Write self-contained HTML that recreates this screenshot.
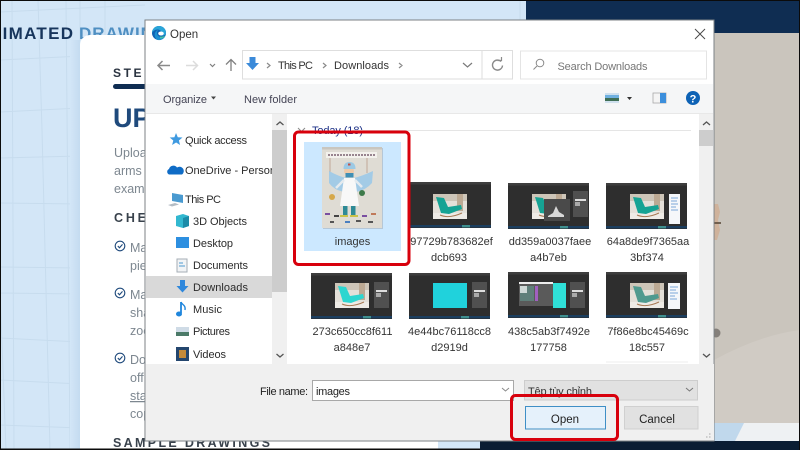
<!DOCTYPE html>
<html><head><meta charset="utf-8"><title>Open</title>
<style>
html,body{margin:0;padding:0;width:800px;height:450px;overflow:hidden;background:#000}
svg{display:block;filter:blur(.3px)}
text{font-family:"Liberation Sans","Noto Sans CJK SC",sans-serif;font-size:11px;fill:#2b2b2b}
.m{text-anchor:middle;font-size:11px;fill:#333}
.g{fill:#7d8790;font-size:12.5px}
.h{font-weight:bold;fill:#39424c;font-size:12.5px;letter-spacing:2.8px}
</style></head><body>
<svg width="800" height="450" viewBox="0 0 800 450" xmlns="http://www.w3.org/2000/svg">
<defs>
<symbol id="ph" viewBox="0 0 34 25" width="34" height="25" overflow="hidden">
  <rect width="34" height="25" fill="#e4e0d9"/>
  <rect x="0" y="0" width="34" height="7" fill="#cdc5b8"/>
  <rect x="24" y="0" width="6" height="17" fill="#bca993"/>
  <rect x="0" y="19" width="34" height="6" fill="#eeebe6"/>
  <path d="M3 3L11 4L15 13L28 11L29 15L16 20L8 19Z" fill="currentColor"/>
  <path d="M7 21Q16 25 29 19" stroke="#a87a55" stroke-width="1" fill="none"/>
</symbol>
<symbol id="sh" viewBox="0 0 81 46" width="81" height="46">
  <rect width="81" height="46" fill="#2e2e2e"/>
  <rect width="81" height="2.5" fill="#3e3e3e"/>
  <rect y="43" width="81" height="2.4" fill="#1b3e5f"/>
  <rect x="52" y="43" width="8" height="2.4" fill="#3e8f8f"/>
</symbol>
<symbol id="pn" viewBox="0 0 15 26" width="15" height="26">
  <rect width="15" height="26" fill="#505050"/>
  <rect x="2" y="8" width="11" height="2" fill="#ddd"/>
  <rect x="2" y="11" width="5" height="4" fill="#aaa"/>
</symbol>
<linearGradient id="sd" x1="0" x2="1" y1="0" y2="0"><stop offset="0" stop-color="#d3e6f7"/><stop offset="1" stop-color="#c4dbf0"/></linearGradient>
</defs>

<!-- page background -->
<rect width="800" height="450" fill="#d3e6f7"/>
<g stroke="#c7dcee" stroke-width="1" fill="none">
  <path d="M12 0L14 450M38 0L42 130L50 450M66 0L70 450M0 12L145 5M0 60L145 53M0 112L80 108M0 158L80 156M0 203L80 204M0 267L80 268M0 293L80 294M0 338L80 342M0 380L80 384M0 425L80 428M0 290L6 450M80 0V40M105 0V35M520 0V20"/>
</g>
<rect x="70" y="40" width="10" height="410" fill="url(#sd)"/>
<rect x="526" y="0" width="274" height="33" fill="#0f2d52"/>
<rect x="714" y="33" width="86" height="390" fill="#cac5bd"/>
<path d="M714 360Q760 335 800 330V423H714Z" fill="#d0cbc4"/>
<path d="M714 204h4l2 8-2 8 2 10-3 10h-3z" fill="#d2a583" opacity=".6"/>
<rect x="714" y="222" width="7" height="2" fill="#5a4a3a" opacity=".8"/>
<circle cx="716" cy="333" r="4.5" fill="#85807b"/>
<rect x="714" y="423" width="86" height="18" fill="#eef1f3"/>
<path d="M714 423H744L735 441H714Z" fill="#c0d8ec"/>
<rect x="480" y="441" width="320" height="9" fill="#0a1d33"/>

<text x="-11" y="39" textLength="84" style="font-size:17px;font-weight:bold;fill:#17355c">NIMATED</text>
<text x="79" y="39" style="font-size:17px;font-weight:bold;fill:#4f8fc2;letter-spacing:1px">DRAWING</text>

<!-- card -->
<rect x="80" y="35" width="358" height="430" rx="10" fill="#fff"/>
<text x="113" y="77" style="font-size:12px;font-weight:bold;fill:#2a3340;letter-spacing:2.6px">STEP</text>
<rect x="113" y="84" width="40" height="5" rx="2.5" fill="#0f2d52"/>
<text x="113" y="127" style="font-size:27px;font-weight:bold;fill:#1f4a7c">UP</text>
<text x="114" y="157" class="g">Upload</text>
<text x="114" y="175" class="g">arms</text>
<text x="114" y="193" class="g">example</text>
<text x="114" y="222" class="h">CHECK</text>
<g fill="none" stroke="#1f4a7c" stroke-width="1.1">
  <circle cx="120" cy="246" r="4.8"/><path d="M117.8 246l1.7 1.8 3-3.4"/>
  <circle cx="120" cy="293" r="4.8"/><path d="M117.8 293l1.7 1.8 3-3.4"/>
  <circle cx="120" cy="358" r="4.8"/><path d="M117.8 358l1.7 1.8 3-3.4"/>
</g>
<text x="130" y="252" class="g">Make</text>
<text x="130" y="270" class="g">piece</text>
<text x="130" y="299" class="g">Make</text>
<text x="130" y="317" class="g">shape</text>
<text x="130" y="335" class="g">zoom</text>
<text x="130" y="364" class="g">Do</text>
<text x="130" y="382" class="g">off</text>
<text x="130" y="400" class="g" text-decoration="underline">stand</text>
<text x="130" y="418" class="g">copy</text>
<text x="113" y="447" textLength="157" style="font-size:12.5px;font-weight:bold;fill:#39424c">SAMPLE DRAWINGS</text>

<!-- dialog -->
<rect x="145" y="20" width="569" height="421" fill="#fff" stroke="#7c8286" stroke-width="1"/>
<!-- edge logo -->
<circle cx="159" cy="33" r="7" fill="#0f62b4"/>
<path d="M152 33A7 7 0 0 1 166 33C166 35 163 36 161 35.500C163 33 161 29.500 157.500 29.500C155 29.500 153 31 152 33Z" fill="#2aa5d8"/>
<path d="M157 39.800A7 7 0 0 0 165.500 35.500C163 37.500 159 37.500 157.500 35C156.500 33 157 31 158.500 30C155.500 30.500 154 33.500 155 36.500C155.500 38 156 39 157 39.800Z" fill="#1c8fd0"/>
<ellipse cx="161" cy="33.500" rx="2.800" ry="2" fill="#fff"/>
<path d="M160 38.500Q163.500 38.500 165.500 35.500Q163 37 160 36.500Z" fill="#45c4a0"/>
<text x="170" y="38" style="font-size:11.500px;fill:#333">Open</text>
<path d="M695 29l10 10M705 29l-10 10" stroke="#4a4a4a" stroke-width="1" fill="none"/>

<!-- nav buttons -->
<path d="M170 65.500h-12M162.500 61l-4.500 4.500 4.500 4.500" stroke="#8a8a8a" stroke-width="1.500" fill="none"/>
<path d="M186 65.500h11M193 61l4.500 4.500-4.500 4.500" stroke="#dcdcdc" stroke-width="1.500" fill="none"/>
<path d="M210 64l2.500 2.500 2.500-2.500" stroke="#808080" stroke-width="1.200" fill="none"/>
<path d="M231 71V59.500M226 64.500l5-5 5 5" stroke="#808080" stroke-width="1.300" fill="none"/>

<!-- address bar -->
<rect x="242.500" y="50.500" width="270" height="28.500" fill="#fff" stroke="#dedede"/>
<path d="M482 51v28" stroke="#dedede"/>
<path d="M249.500 57h6v6h3.500l-6.500 7-6.500-7h3.500z" fill="#3b8ad9"/>
<path d="M267 63l3 2.500-3 2.500M323 63l3 2.500-3 2.500M399 63l3 2.500-3 2.500" stroke="#8a8a8a" stroke-width="1.200" fill="none"/>
<text x="278" y="69" textLength="35" style="fill:#333">This PC</text>
<text x="334" y="69" textLength="55" style="fill:#333">Downloads</text>
<path d="M463 63l4.500 4 4.500-4" stroke="#7a7a7a" stroke-width="1.200" fill="none"/>
<path d="M501 61.500a5 5 0 1 0 1.500 4" stroke="#8a8a8a" stroke-width="1.400" fill="none"/>
<path d="M497.500 60.500h4v-3.500" stroke="#8a8a8a" stroke-width="1.200" fill="none"/>

<!-- search -->
<rect x="520.500" y="51" width="186" height="28" fill="#fff" stroke="#e4e4e4"/>
<circle cx="540" cy="63" r="3.800" fill="none" stroke="#8a8a8a"/>
<path d="M537 66l-3.500 3.500" stroke="#8a8a8a"/>
<text x="557.500" y="70" textLength="90" style="fill:#777">Search Downloads</text>

<!-- toolbar -->
<rect x="146" y="84" width="567" height="30" fill="#f5f6f7"/>
<path d="M146 113.500H713" stroke="#e8e8e8"/>
<text x="163" y="103" textLength="44" style="fill:#445">Organize</text>
<path d="M211 96.500h5l-2.500 3z" fill="#444"/>
<text x="244" y="103" textLength="53" style="fill:#445">New folder</text>
<rect x="605" y="93" width="14" height="10" fill="#cfe0ee"/>
<rect x="605" y="95" width="14" height="3" fill="#6fb0e0"/>
<rect x="605" y="98" width="14" height="3" fill="#3f6e55"/>
<path d="M627 97h5l-2.500 3z" fill="#333"/>
<rect x="653" y="93" width="13" height="10" fill="#f4f4f4" stroke="#a8a8a8" stroke-width=".8"/>
<rect x="660" y="93" width="6" height="10" fill="#3c8fdc"/>
<circle cx="693" cy="98" r="7" fill="#0d62b5"/>
<text x="693" y="102.500" text-anchor="middle" style="font-size:11px;font-weight:bold;fill:#fff">?</text>

<!-- nav pane -->
<rect x="146" y="276" width="126" height="22" fill="#d9d9d9"/>
<path d="M176 133l1.800 4.200 4.700.3-3.600 3 1.200 4.500-4-2.500-4 2.500 1.200-4.500-3.600-3 4.700-.3z" fill="#3f9ae0"/>
<text x="185" y="144" textLength="62">Quick access</text>
<path d="M169 174.500a3 3 0 0 1 0-5.500a4.500 4.500 0 0 1 8-1.500a3.500 3.500 0 0 1 5 7z" fill="#0f6cc6"/>
<text x="185" y="174" textLength="91">OneDrive - Person</text>
<path d="M172 193l11 2v8l-11-2z" fill="#4a9ad0"/>
<path d="M168 205l7-2 4 1.500-7 2z" fill="#b4bcc4"/>
<text x="185" y="203" textLength="36">This PC</text>
<path d="M176 216l7-2 6 2v10l-6 2-7-2z" fill="#32b8d0"/><path d="M183 218v10l6-2v-10z" fill="#1b8ba8"/>
<text x="193" y="225" textLength="54">3D Objects</text>
<rect x="176" y="237" width="13" height="11" fill="#2d8fe0"/>
<text x="193" y="247" textLength="40">Desktop</text>
<rect x="177" y="259" width="10" height="13" fill="#f2f4f6" stroke="#a5aeb6"/>
<path d="M179 263h4M179 266h6" stroke="#4f9ad0"/>
<text x="193" y="269" textLength="55">Documents</text>
<path d="M180 280h5v6h3.500l-6 6.500-6-6.500h3.500z" fill="#2f88dc"/>
<text x="193" y="291" textLength="55">Downloads</text>
<path d="M181 302v11" stroke="#1f86dc" stroke-width="1.800"/><ellipse cx="179" cy="314" rx="3" ry="2.500" fill="#1f86dc"/><path d="M181 302c1 3 5 3 4 8" stroke="#1f86dc" stroke-width="1.400" fill="none"/>
<text x="193" y="313" textLength="29">Music</text>
<rect x="176" y="327" width="13" height="9" fill="#cfdbe6"/><rect x="176" y="332" width="13" height="4" fill="#4b7a68"/>
<text x="193" y="335" textLength="37">Pictures</text>
<rect x="176" y="347" width="13" height="14" fill="#24466e"/><rect x="179" y="350" width="7" height="8" fill="#c48a3a"/>
<text x="193" y="358" textLength="33">Videos</text>
<rect x="272" y="114" width="15" height="250" fill="#f0f0f0"/>
<rect x="272" y="130" width="15" height="162" fill="#cdcdcd"/>
<path d="M276.500 125l3.500-3 3.500 3M276.500 354l3.500 3 3.500-3" stroke="#555" stroke-width="1.300" fill="none"/>
<rect x="287" y="114" width="3" height="250" fill="#fff"/>

<!-- content scroll -->
<rect x="699" y="114" width="14" height="250" fill="#f0f0f0"/>
<rect x="699" y="130" width="14" height="16" fill="#cdcdcd"/>
<path d="M703 125l3.500-3 3.500 3M703 354l3.500 3 3.500-3" stroke="#555" stroke-width="1.300" fill="none"/>

<!-- group header -->
<path d="M298 128l3.500 3.500 3.500-3.500" stroke="#8a8a8a" fill="none"/>
<text x="312" y="134" textLength="51" style="fill:#1e3287">Today (18)</text>
<path d="M352 130.500H691" stroke="#e5e5e5"/>

<!-- selected item -->
<rect x="304" y="142" width="97" height="109" fill="#cce8ff"/>
<rect x="323" y="148" width="60" height="81" fill="#9aa0a6" opacity=".45"/>
<rect x="322" y="147" width="60" height="81" fill="#dfdcd4"/>
<rect x="322" y="147" width="60" height="2.500" fill="#c9c6bf"/>
<rect x="326" y="152" width="51" height="6" fill="#f3f1ec"/>
<path d="M328 155h47" stroke="#7a6070" stroke-width="1.400" stroke-dasharray="2 1"/>
<path d="M330 158v15M367 158v15" stroke="#c0a898" stroke-width="1"/>
<path d="M329 171Q338 176 346 178L344 192Q334 190 329 183Z" fill="#a3cbe6"/>
<path d="M373 171Q362 176 354 178L356 192Q366 190 372 183Z" fill="#a3cbe6"/>
<circle cx="349" cy="171" r="5" fill="#eec9a8"/>
<path d="M343.500 169q0-7 6-7q6 0 6 7z" fill="#9cc9e4"/>
<rect x="348" y="163.500" width="2.500" height="2" fill="#c0504a"/>
<rect x="345.500" y="173" width="8" height="4.500" fill="#3f8fb5"/>
<path d="M344 178h11l4 28h-19z" fill="#f8f8f8"/>
<path d="M344 180l-8 8M355 180l7 7" stroke="#e4eaee" stroke-width="2.500"/>
<rect x="343" y="206" width="4.500" height="9" fill="#2e8a96"/>
<rect x="351" y="206" width="4.500" height="9" fill="#2e8a96"/>
<path d="M340 216h8M350 216h8" stroke="#c9c24a" stroke-width="2"/>
<circle cx="332" cy="197" r="3" fill="#d6a84a"/>
<circle cx="362" cy="193" r="3" fill="#3d7a4a"/>
<g stroke-width="2">
<path d="M325 214h5" stroke="#7a4fa0"/><path d="M334 216h5" stroke="#444"/><path d="M330 222h4" stroke="#555"/>
<path d="M345 222h5" stroke="#4a7fc0"/><path d="M356 221h5" stroke="#555"/><path d="M362 216h5" stroke="#7a4fa0"/>
<path d="M371 214h5" stroke="#c07a5a"/><path d="M368 222h5" stroke="#555"/>
</g>
<text x="352.500" y="245" class="m">images</text>

<!-- thumbs row 1 -->
<use href="#sh" x="410" y="182"/><use href="#ph" x="433" y="194" style="color:#16a394"/>
<text x="451.500" y="245" class="m">97729b783682ef</text><text x="449" y="261" class="m">dcb693</text>

<use href="#sh" x="508" y="183"/><use href="#ph" x="532" y="194" style="color:#16a394"/>
<rect x="544" y="199" width="26" height="22" fill="#4a4a4a"/><path d="M548 216l5-3 3-7 3 6 5 3v2h-16z" fill="#d8d8d8"/>
<use href="#pn" x="573" y="191"/>
<text x="550" y="245" class="m">dd359a0037faee</text><text x="548.500" y="261" class="m">a4b7eb</text>

<use href="#sh" x="606" y="183"/><use href="#ph" x="630" y="194" style="color:#16a394"/>
<rect x="669" y="194" width="11" height="30" fill="#f5f7fa"/><path d="M671 198h7M671 201h6M671 204h7M671 207h5M671 210h7" stroke="#7aa7d8"/>
<text x="648" y="245" class="m">64a8de9f7365aa</text><text x="647" y="261" class="m">3bf374</text>

<!-- thumbs row 2 -->
<use href="#sh" x="311" y="273"/><use href="#ph" x="335" y="283" style="color:#2dd6d0"/><use href="#pn" x="374" y="282"/>
<text x="352.500" y="335" class="m">273c650cc8f611</text><text x="352" y="351" class="m">a848e7</text>

<use href="#sh" x="409" y="273"/><rect x="433" y="283" width="34" height="25" fill="#20d2dc"/><use href="#pn" x="472" y="282"/>
<text x="449.500" y="335" class="m">4e44bc76118cc8</text><text x="449.500" y="351" class="m">d2919d</text>

<use href="#sh" x="508" y="272"/><rect x="553" y="283" width="13" height="25" fill="#2fe0d8"/>
<rect x="519" y="282" width="34" height="24" fill="#5a5a5a"/><rect x="519" y="282" width="34" height="2" fill="#eee"/>
<rect x="520" y="286" width="14" height="15" fill="#5f7f7a"/><rect x="520" y="286" width="7" height="7" fill="#fff" opacity=".7"/><rect x="535" y="286" width="3" height="15" fill="#a060c0"/>
<use href="#pn" x="570" y="282"/>
<text x="549" y="335" class="m">438c5ab3f7492e</text><text x="548.500" y="351" class="m">177758</text>

<use href="#sh" x="606" y="272"/><use href="#ph" x="630" y="283" style="color:#4f9a8f"/>
<rect x="668" y="283" width="12" height="26" fill="#f5f7fa"/><path d="M670 287h8M670 290h6M670 293h8M670 296h5M670 299h7" stroke="#7aa7d8"/>
<text x="648" y="335" class="m">7f86e8bc45469c</text><text x="647" y="351" class="m">18c557</text>
<path d="M606 362H688" stroke="#ececec"/>

<!-- footer -->
<rect x="146" y="364" width="568" height="76.500" fill="#f0f0f0"/>
<text x="260" y="395" textLength="48" style="fill:#222">File name:</text>
<rect x="312.500" y="380.500" width="201" height="20" fill="#fff" stroke="#a8a8a8"/>
<text x="316" y="395" textLength="34" style="fill:#222">images</text>
<path d="M502 388l3.500 3 3.500-3" stroke="#8a8a8a" fill="none"/>
<rect x="524.500" y="380.500" width="173" height="19.500" fill="#e1e1e1" stroke="#cdcdcd"/>
<text x="528" y="395" textLength="64" style="fill:#333">Tệp tùy chỉnh</text>
<path d="M686 388l3.500 3 3.500-3" stroke="#777" fill="none"/>
<rect x="525.500" y="406.500" width="80" height="22.500" fill="#e5f1fb" stroke="#3f8fc6"/>
<text x="565" y="423" text-anchor="middle" style="font-size:11.500px;fill:#222">Open</text>
<rect x="624.500" y="406.500" width="73.500" height="22.500" fill="#e1e1e1" stroke="#d0d0d0"/>
<text x="657" y="423" text-anchor="middle" style="font-size:11.500px;fill:#222">Cancel</text>
<path d="M709 437h1.500M706 437h1.500M709 434h1.500" stroke="#aaa"/>

<!-- red boxes -->
<rect x="294.500" y="132" width="114.500" height="132.500" rx="4" fill="none" stroke="#d8000c" stroke-width="3"/>
<rect x="511.500" y="395.500" width="106" height="44" rx="4" fill="none" stroke="#d8000c" stroke-width="3"/>

<!-- screenshot edges -->
<path d="M0 .5H800M.5 0V450M799.500 0V450" stroke="#0b0b0b"/>
<rect x="0" y="448.500" width="480" height="1.500" fill="#0b0b0b"/>
</svg>
</body></html>
